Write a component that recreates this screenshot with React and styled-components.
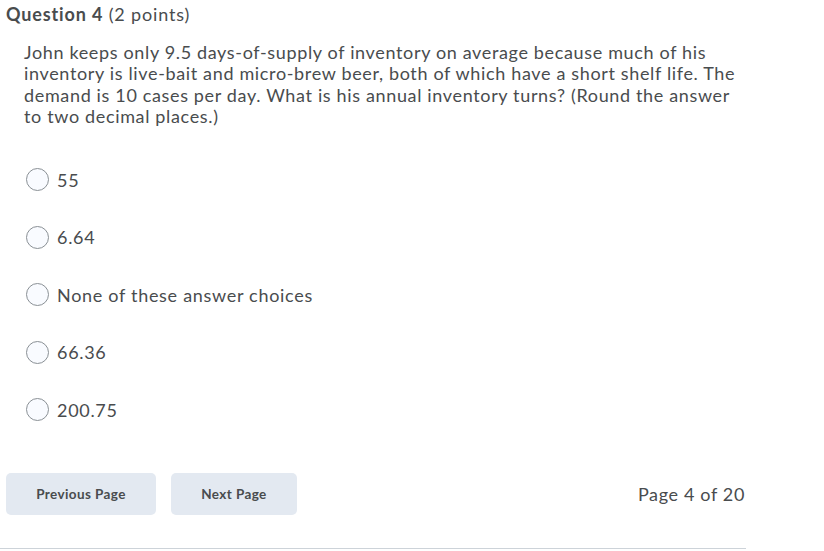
import React from "react";
import styled, { createGlobalStyle } from "styled-components";

const Global = createGlobalStyle`
  html, body { margin: 0; padding: 0; background: #fff; }
  body { font-family: Lato, "Open Sans", sans-serif; color: #494c4e; }
`;

const Page = styled.div`
  width: 746px;
  display: flex;
  flex-direction: column;
`;

const Title = styled.h2`
  margin: 3px 0 0 6px;
  font-size: 18px;
  letter-spacing: 0.85px;
  line-height: 22px;
  font-weight: 400;
  color: #494c4e;
`;

const Strong = styled.span`
  font-weight: 700;
`;

const Prompt = styled.p`
  margin: 17px 0 0 24px;
  width: 720px;
  font-size: 18px;
  letter-spacing: 0.65px;
  line-height: 21.3px;
`;

const Options = styled.div`
  display: flex;
  flex-direction: column;
  margin-top: 24px;
  padding-left: 26px;
`;

const Option = styled.label`
  display: flex;
  align-items: center;
  height: 57.5px;
  gap: 8px;
  font-size: 18px;
  letter-spacing: 0.7px;
`;

const Radio = styled.span`
  width: 23px;
  height: 23px;
  box-sizing: border-box;
  border-radius: 50%;
  border: 1px solid #8a9095;
  background: #f9fbff;
  flex-shrink: 0;
`;

const Footer = styled.div`
  display: flex;
  align-items: center;
  margin-top: 34px;
  padding: 0 1px 0 6px;
  gap: 15px;
`;

const Button = styled.button`
  width: ${(p) => p.$w}px;
  height: 42px;
  border: none;
  border-radius: 5px;
  background: #e3e9f1;
  color: #494c4e;
  font-family: Lato, sans-serif;
  font-size: 13.5px;
  letter-spacing: 0.4px;
  font-weight: 700;
`;

const PageInfo = styled.span`
  margin-left: auto;
  font-size: 18px;
  letter-spacing: 0.65px;
`;

const Rule = styled.hr`
  margin: 33px 0 0 0;
  border: none;
  border-top: 1px solid #cdd3d9;
  width: 746px;
`;

const choices = ["55", "6.64", "None of these answer choices", "66.36", "200.75"];

export default function App() {
  return (
    <>
      <Global />
      <Page>
        <Title>
          <Strong>Question 4</Strong> (2 points)
        </Title>
        <Prompt>
          John keeps only 9.5 days-of-supply of inventory on average because much of his
          inventory is live-bait and micro-brew beer, both of which have a short shelf life. The
          demand is 10 cases per day. What is his annual inventory turns? (Round the answer
          to two decimal places.)
        </Prompt>
        <Options>
          {choices.map((c) => (
            <Option key={c}>
              <Radio />
              {c}
            </Option>
          ))}
        </Options>
        <Footer>
          <Button $w={150}>Previous Page</Button>
          <Button $w={126}>Next Page</Button>
          <PageInfo>Page 4 of 20</PageInfo>
        </Footer>
        <Rule />
      </Page>
    </>
  );
}
